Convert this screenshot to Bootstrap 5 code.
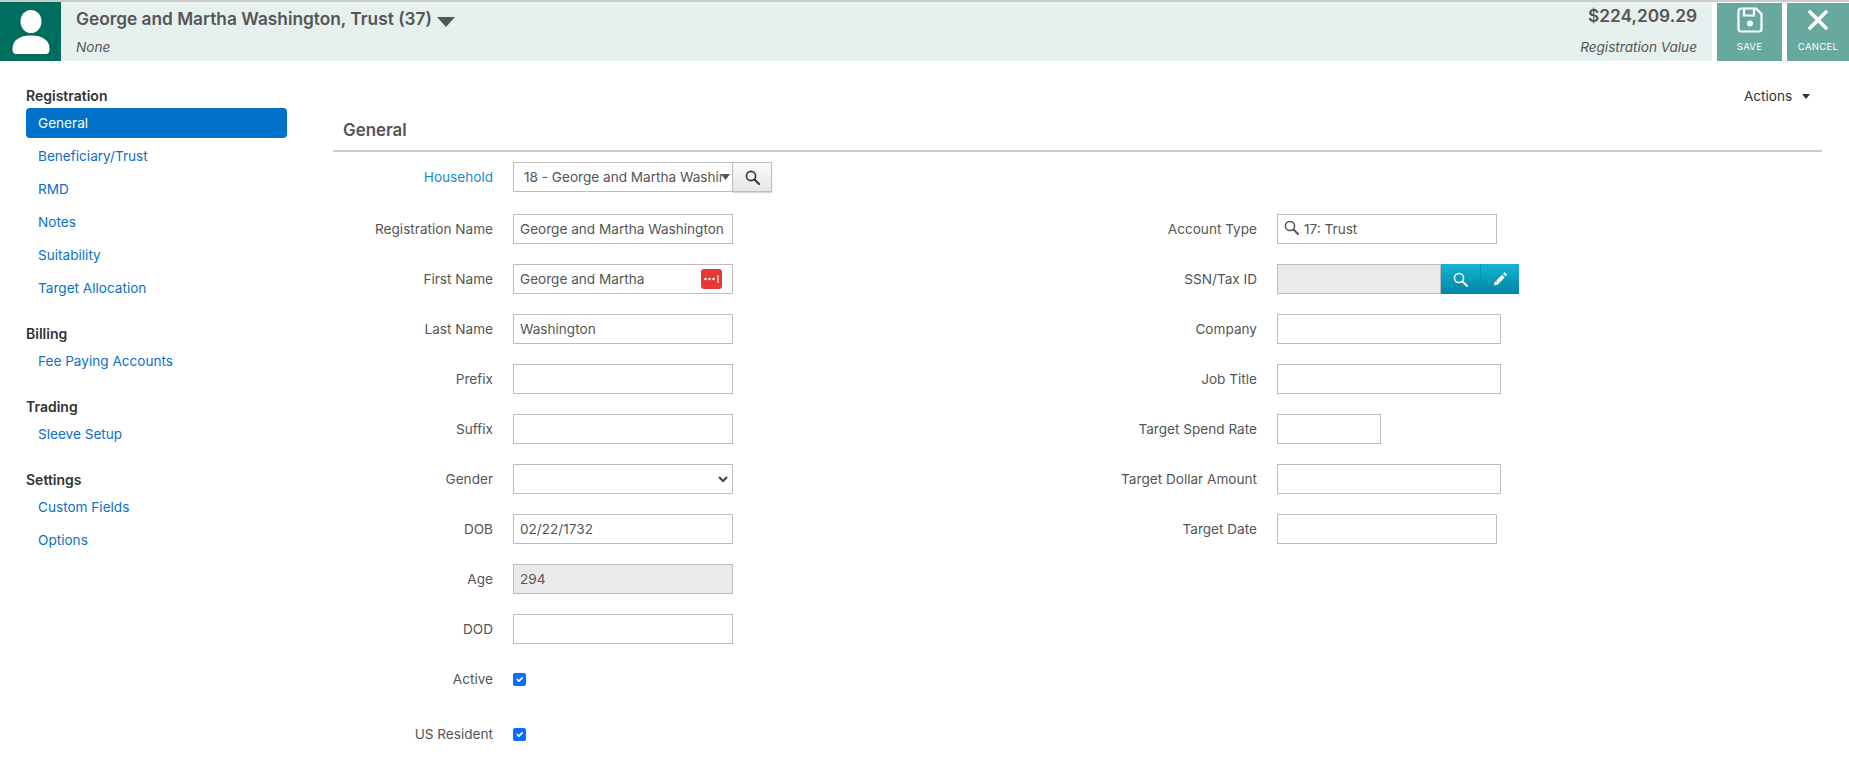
<!DOCTYPE html>
<html lang="en">
<head>
    <meta charset="UTF-8">
    <title>General</title>
    <link href="https://cdn.jsdelivr.net/npm/bootstrap@5.3.3/dist/css/bootstrap.min.css" rel="stylesheet">
    <style>
        body {
            font-family: Inter, "Liberation Sans", sans-serif;
            font-size: 13.6px;
            color: #555;
            background-color: #fff;
            overflow: hidden;
        }
        .top-bar {
            height: 61px;
            border-top: 2px solid #ccc;
        }
        .top-avatar {
            width: 61px;
            background-color: #006e5f;
        }
        .top-info {
            background-color: #e6f0ee;
            padding: 0 15px;
        }
        .top-title {
            font-size: 17.3px;
            font-weight: 600;
            line-height: 20px;
            padding-top: 7px;
        }
        .top-sub {
            font-style: italic;
            font-size: 13.6px;
            line-height: 16px;
            padding-top: 10px;
        }
        .top-value {
            font-size: 17.3px;
            font-weight: 600;
            line-height: 20px;
            padding-top: 4px;
        }
        .top-value + .top-sub {
            padding-top: 13px;
        }
        .title-caret {
            display: inline-block;
            border-left: 9px solid transparent;
            border-right: 9px solid transparent;
            border-top: 10px solid #555;
            margin-left: 1px;
            vertical-align: -2px;
        }
        .top-action {
            width: 65px;
            margin-left: 5px;
            padding: 4px 0 7px;
            background-color: #68a99f;
            color: #fff;
            font-size: 9.5px;
            letter-spacing: .3px;
            border-top: 1px solid #fff;
        }
        .top-action:last-child {
            width: 62px;
        }
        .side-menu {
            width: 261px;
            margin-left: 26px;
            margin-right: 46px;
            padding-top: 25px;
        }
        .side-head {
            font-size: 14px;
            font-weight: 600;
            color: #333;
            line-height: 20px;
            margin-bottom: 2px;
        }
        .side-group {
            margin-bottom: 21px;
        }
        .side-link {
            display: block;
            height: 30px;
            line-height: 30px;
            margin-bottom: 3px;
            padding-left: 12px;
            color: #0b70c8;
            text-decoration: none;
            border-radius: 4px;
        }
        .side-link.is-current {
            background-color: #0070c9;
            color: #fff;
        }
        .main-pane {
            width: 1489px;
        }
        .actions-line {
            height: 33px;
            padding: 25px 12px 0 0;
            line-height: 20px;
            color: #333;
        }
        .actions-caret {
            display: inline-block;
            border-left: 4.5px solid transparent;
            border-right: 4.5px solid transparent;
            border-top: 5px solid #333;
            margin-left: 6px;
            vertical-align: 2px;
        }
        .pane-title {
            font-size: 16.9px;
            font-weight: 600;
            line-height: 20px;
            padding: 26px 0 10px 10px;
            margin: 0;
            border-bottom: 2px solid #ccc;
        }
        .field-line {
            display: flex;
            align-items: center;
            height: 30px;
            margin-bottom: 20px;
        }
        .household-line {
            margin-top: 10px;
            margin-bottom: 22px;
        }
        .field-label {
            flex: none;
            text-align: right;
            margin: 0;
            padding: 1px 20px 0 0;
        }
        .left-col .field-label {
            width: 180px;
        }
        .right-col .field-label {
            width: 199.5px;
        }
        .house-link {
            color: #1a8bcf;
        }
        .field-box {
            border: 1px solid #bdbdbd;
            border-radius: 0;
            height: 30px;
            min-height: 30px;
            padding: 0 6px;
            font-size: 13.6px;
            color: #555;
            box-shadow: none;
            background-color: #fff;
        }
        .field-box:disabled {
            background-color: #eaeaea;
            opacity: 1;
        }
        .w-220 {
            width: 220px;
        }
        .w-224 {
            width: 224px;
        }
        .w-104 {
            width: 104px;
        }
        .w-164 {
            width: 164px;
        }
        .house-select.form-select {
            padding: 0 8px 0 10px;
            background-size: 9px 6px;
            background-position: right 2px center;
            background-image: url("data:image/svg+xml,%3csvg xmlns='http://www.w3.org/2000/svg' viewBox='0 0 9 6'%3e%3cpath fill='%23555' d='M0 0h9L4.500 6z'/%3e%3c/svg%3e");
        }
        .gender-select.form-select {
            background-size: 10px 8px;
            background-position: right 4px center;
            background-image: url("data:image/svg+xml,%3csvg xmlns='http://www.w3.org/2000/svg' viewBox='0 0 10 8'%3e%3cpath fill='none' stroke='%23444' stroke-width='2.200' d='M1 2l4 4 4-4'/%3e%3c/svg%3e");
        }
        .search-btn {
            width: 39px;
            height: 30px;
            padding: 0;
            border: 1px solid #bdbdbd;
            border-left: 0;
            border-radius: 0;
            background: linear-gradient(#fafafa, #e6e6e6);
            box-shadow: 0 1px 1px rgba(0, 0, 0, .15);
        }
        .teal-btn {
            width: 39px;
            height: 30px;
            padding: 0;
            border: 0;
            border-radius: 0;
            background: linear-gradient(#14b4d0, #0086a6);
        }
        .teal-btn + .teal-btn {
            border-left: 1px solid #0a8fae;
        }
        .type-icon {
            position: absolute;
            left: 7px;
            top: 6px;
        }
        .type-input {
            padding-left: 26px;
        }
        .lock-badge {
            position: absolute;
            right: 11px;
            top: 5px;
            width: 21px;
            height: 20px;
            border-radius: 3px;
            background-color: #e53935;
        }
        .tick-box.form-check-input {
            width: 13px;
            height: 13px;
            margin: 0;
            border-radius: 2px;
            background-color: #0b6ffb;
            border-color: #0b6ffb;
        }
        .tick-gap {
            margin-bottom: 25px;
        }
    </style>
</head>
<body>
<header class="top-bar d-flex">
    <div class="top-avatar d-flex align-items-center justify-content-center">
        <svg width="38" height="44" viewBox="0 0 38 44" fill="#fff">
            <ellipse cx="19" cy="11.500" rx="10.500" ry="11.500"/>
            <path d="M0.500 39c0-9 7-13.500 18.500-13.500S37.500 30 37.500 39c0 3-1 5-4 5H4.500c-3 0-4-2-4-5z"/>
        </svg>
    </div>
    <div class="top-info flex-grow-1 d-flex justify-content-between">
        <div>
            <div class="top-title">George and Martha Washington, Trust (37) <span class="title-caret"></span></div>
            <div class="top-sub">None</div>
        </div>
        <div class="text-end">
            <div class="top-value">$224,209.29</div>
            <div class="top-sub">Registration Value</div>
        </div>
    </div>
    <div class="top-action d-flex flex-column align-items-center justify-content-between">
        <svg width="26" height="26" viewBox="0 0 26 26" fill="none" stroke="#fff" stroke-width="2.200">
            <path d="M4 1.500h15l5.500 5.500v15a2.500 2.500 0 0 1-2.500 2.500H4A2.500 2.500 0 0 1 1.500 22V4A2.500 2.500 0 0 1 4 1.500z"/>
            <path d="M7 2v6.500h10V2"/>
            <circle cx="13" cy="16.500" r="3" fill="#fff" stroke="none"/>
        </svg>
        <span>SAVE</span>
    </div>
    <div class="top-action d-flex flex-column align-items-center justify-content-between">
        <svg width="26" height="26" viewBox="0 0 26 26" fill="none" stroke="#fff" stroke-width="3.600" stroke-linecap="round">
            <path d="M5 5l16 16M21 5L5 21"/>
        </svg>
        <span>CANCEL</span>
    </div>
</header>

<div class="d-flex">
    <nav class="side-menu flex-shrink-0">
        <div class="side-group">
            <div class="side-head">Registration</div>
            <a class="side-link is-current" href="#">General</a>
            <a class="side-link" href="#">Beneficiary/Trust</a>
            <a class="side-link" href="#">RMD</a>
            <a class="side-link" href="#">Notes</a>
            <a class="side-link" href="#">Suitability</a>
            <a class="side-link" href="#">Target Allocation</a>
        </div>
        <div class="side-group">
            <div class="side-head">Billing</div>
            <a class="side-link" href="#">Fee Paying Accounts</a>
        </div>
        <div class="side-group">
            <div class="side-head">Trading</div>
            <a class="side-link" href="#">Sleeve Setup</a>
        </div>
        <div class="side-group">
            <div class="side-head">Settings</div>
            <a class="side-link" href="#">Custom Fields</a>
            <a class="side-link" href="#">Options</a>
        </div>
    </nav>

    <main class="main-pane flex-shrink-0">
        <div class="actions-line text-end">Actions <span class="actions-caret"></span></div>
        <h5 class="pane-title">General</h5>

        <div class="field-line left-col household-line">
            <label class="field-label"><a href="#" class="text-decoration-none house-link">Household</a></label>
            <select class="form-select field-box house-select w-220">
                <option>18 - George and Martha Washington</option>
            </select>
            <button class="search-btn d-flex align-items-center justify-content-center" type="button">
                <svg width="15" height="15" viewBox="0 0 15 15" fill="none" stroke="#333" stroke-width="1.600"><circle cx="6" cy="6" r="4.600"/><path d="M9.500 9.500L14 14" stroke-linecap="round" stroke-width="2"/></svg>
            </button>
        </div>

        <div class="row g-0">
            <div class="col-6 left-col">
                <div class="field-line"><label class="field-label">Registration Name</label><input class="form-control field-box w-220" value="George and Martha Washington"></div>
                <div class="field-line">
                    <label class="field-label">First Name</label>
                    <div class="position-relative">
                        <input class="form-control field-box w-220" value="George and Martha">
                        <span class="lock-badge d-flex align-items-center justify-content-center">
                            <svg width="17" height="8" viewBox="0 0 17 8" fill="#fff"><circle cx="2.500" cy="4" r="1.300"/><circle cx="6.500" cy="4" r="1.300"/><circle cx="10.500" cy="4" r="1.300"/><rect x="14.500" y="0" width="1" height="8"/></svg>
                        </span>
                    </div>
                </div>
                <div class="field-line"><label class="field-label">Last Name</label><input class="form-control field-box w-220" value="Washington"></div>
                <div class="field-line"><label class="field-label">Prefix</label><input class="form-control field-box w-220"></div>
                <div class="field-line"><label class="field-label">Suffix</label><input class="form-control field-box w-220"></div>
                <div class="field-line">
                    <label class="field-label">Gender</label>
                    <select class="form-select field-box gender-select w-220"><option></option></select>
                </div>
                <div class="field-line"><label class="field-label">DOB</label><input class="form-control field-box w-220" value="02/22/1732"></div>
                <div class="field-line"><label class="field-label">Age</label><input class="form-control field-box w-220" value="294" disabled></div>
                <div class="field-line"><label class="field-label">DOD</label><input class="form-control field-box w-220"></div>
                <div class="field-line tick-gap"><label class="field-label">Active</label><input class="form-check-input tick-box" type="checkbox" checked></div>
                <div class="field-line"><label class="field-label">US Resident</label><input class="form-check-input tick-box" type="checkbox" checked></div>
            </div>
            <div class="col-6 right-col">
                <div class="field-line">
                    <label class="field-label">Account Type</label>
                    <div class="position-relative">
                        <input class="form-control field-box type-input w-220" value="17: Trust">
                        <svg class="type-icon" width="15" height="15" viewBox="0 0 15 15" fill="none" stroke="#555" stroke-width="1.500"><circle cx="6" cy="6" r="4.600"/><path d="M9.500 9.500L14 14" stroke-linecap="round" stroke-width="2"/></svg>
                    </div>
                </div>
                <div class="field-line">
                    <label class="field-label">SSN/Tax ID</label>
                    <input class="form-control field-box w-164" disabled>
                    <button class="teal-btn d-flex align-items-center justify-content-center" type="button">
                        <svg width="15" height="15" viewBox="0 0 15 15" fill="none" stroke="#fff" stroke-width="1.500"><circle cx="6" cy="6" r="4.600"/><path d="M9.500 9.500L14 14" stroke-linecap="round" stroke-width="2"/></svg>
                    </button>
                    <button class="teal-btn d-flex align-items-center justify-content-center" type="button">
                        <svg width="14" height="14" viewBox="0 0 14 14" fill="#fff"><path d="M9 2.800l2.700 2.700-7 7L1 13.500l.5-3.200 1-1 .9.900.7-.7-.9-.9z"/><path d="M10 1.800l1-1c.4-.4 1-.4 1.400 0l1 1c.4.4.4 1 0 1.400l-1 1z"/></svg>
                    </button>
                </div>
                <div class="field-line"><label class="field-label">Company</label><input class="form-control field-box w-224"></div>
                <div class="field-line"><label class="field-label">Job Title</label><input class="form-control field-box w-224"></div>
                <div class="field-line"><label class="field-label">Target Spend Rate</label><input class="form-control field-box w-104"></div>
                <div class="field-line"><label class="field-label">Target Dollar Amount</label><input class="form-control field-box w-224"></div>
                <div class="field-line"><label class="field-label">Target Date</label><input class="form-control field-box w-220"></div>
            </div>
        </div>
    </main>
</div>
<script src="https://cdn.jsdelivr.net/npm/bootstrap@5.3.3/dist/js/bootstrap.bundle.min.js"></script>
</body>
</html>
